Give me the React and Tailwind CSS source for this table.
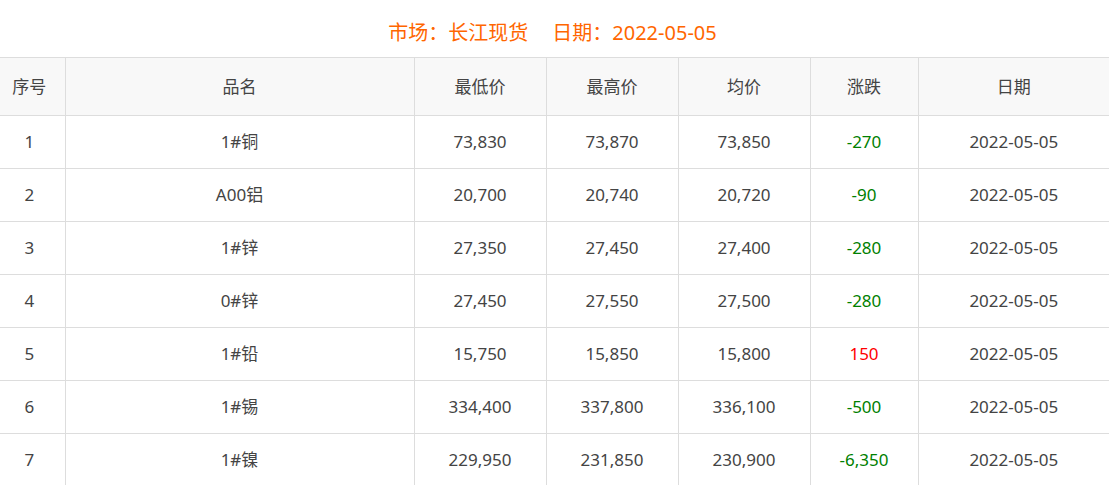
import React from "react";

const rows = [
  ["1", "1#铜", "73,830", "73,870", "73,850", "-270", "2022-05-05"],
  ["2", "A00铝", "20,700", "20,740", "20,720", "-90", "2022-05-05"],
  ["3", "1#锌", "27,350", "27,450", "27,400", "-280", "2022-05-05"],
  ["4", "0#锌", "27,450", "27,550", "27,500", "-280", "2022-05-05"],
  ["5", "1#铅", "15,750", "15,850", "15,800", "150", "2022-05-05"],
  ["6", "1#锡", "334,400", "337,800", "336,100", "-500", "2022-05-05"],
  ["7", "1#镍", "229,950", "231,850", "230,900", "-6,350", "2022-05-05"],
];

const widths = ["w-[65px]", "w-[349px]", "w-[132px]", "w-[132px]", "w-[132px]", "w-[108px]", "w-auto"];
const heads = ["序号", "品名", "最低价", "最高价", "均价", "涨跌", "日期"];

export default function App() {
  return (
    <div
      className="w-[1109px] bg-white text-[#444]"
      style={{ fontFamily: '"Noto Sans", "Noto Sans CJK SC", sans-serif' }}
    >
      <div className="h-[57px] flex items-center justify-center pt-[8px] pr-[4px] text-[20px] text-[#ff6600]">
        <span>市场：长江现货</span>
        <span className="ml-[24px]">日期：2022-05-05</span>
      </div>
      <table className="w-full border-collapse table-fixed text-[17px]">
        <colgroup>
          {widths.map((w, i) => (
            <col key={i} className={w} />
          ))}
        </colgroup>
        <thead>
          <tr className="h-[58px] bg-[#f8f8f8]">
            {heads.map((h, i) => (
              <th
                key={i}
                className={`font-normal text-center border-y border-[#dddddd] ${i > 0 ? "border-l" : "pr-[6px]"}`}
              >
                {h}
              </th>
            ))}
          </tr>
        </thead>
        <tbody>
          {rows.map((r, ri) => (
            <tr key={ri} className="h-[53px]">
              {r.map((c, ci) => (
                <td
                  key={ci}
                  className={`text-center border-b border-[#dddddd] ${ci > 0 ? "border-l" : "pr-[6px]"} ${
                    ci === 5 ? (c.startsWith("-") ? "text-[#008000]" : "text-[#ff0000]") : ""
                  }`}
                >
                  {c}
                </td>
              ))}
            </tr>
          ))}
        </tbody>
      </table>
    </div>
  );
}
